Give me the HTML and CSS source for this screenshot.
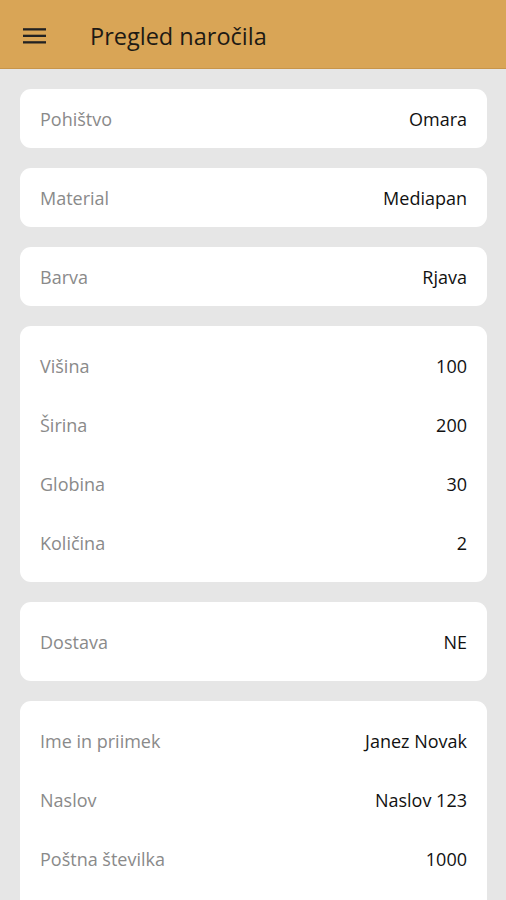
FILE: index.html
```html
<!DOCTYPE html>
<html lang="sl">
<head>
<meta charset="utf-8">
<title>Pregled naročila</title>
<link rel="stylesheet" href="styles.css">
</head>
<body>
<header class="appbar">
  <svg class="menu" width="23" height="16" viewBox="0 0 23 16"><rect x="0" y="0.2" width="23" height="2.3" fill="#222"/><rect x="0" y="6.7" width="23" height="2.3" fill="#222"/><rect x="0" y="13.2" width="23" height="2.3" fill="#222"/></svg>
  <h1 class="title">Pregled naročila</h1>
</header>
<main class="content">
  <section class="card">
    <div class="row"><span class="label">Pohištvo</span><span class="value">Omara</span></div>
  </section>
  <section class="card">
    <div class="row"><span class="label">Material</span><span class="value">Mediapan</span></div>
  </section>
  <section class="card">
    <div class="row"><span class="label">Barva</span><span class="value">Rjava</span></div>
  </section>
  <section class="card padded">
    <div class="row"><span class="label">Višina</span><span class="value">100</span></div>
    <div class="row"><span class="label">Širina</span><span class="value">200</span></div>
    <div class="row"><span class="label">Globina</span><span class="value">30</span></div>
    <div class="row"><span class="label">Količina</span><span class="value">2</span></div>
  </section>
  <section class="card padded">
    <div class="row"><span class="label">Dostava</span><span class="value">NE</span></div>
  </section>
  <section class="card padded last">
    <div class="row"><span class="label">Ime in priimek</span><span class="value">Janez Novak</span></div>
    <div class="row"><span class="label">Naslov</span><span class="value">Naslov 123</span></div>
    <div class="row"><span class="label">Poštna številka</span><span class="value">1000</span></div>
  </section>
</main>
</body>
</html>
```
FILE: styles.css
```css
* { box-sizing: border-box; }
html, body { margin: 0; padding: 0; }
body {
  background: #e6e6e6;
  font-family: "Open Sans", "Noto Sans", sans-serif;
  height: 900px;
  overflow: hidden;
}
.appbar {
  height: 69px;
  background: #d9a556;
  border-bottom: 1px solid #c8954a;
  display: flex;
  align-items: center;
  padding-left: 23px;
  padding-top: 3px;
}
.menu { display: block; }
.title {
  margin: 0 0 0 44px;
  font-size: 23.5px;
  font-weight: 400;
  color: #1e1a14;
}
.content {
  padding: 20px 19px 0 20px;
  display: flex;
  flex-direction: column;
  gap: 20px;
}
.card {
  background: #fff;
  border-radius: 11px;
}
.card.padded { padding: 10px 0; }
.card.last { padding-bottom: 30px; }
.row {
  height: 59px;
  display: flex;
  align-items: center;
  justify-content: space-between;
  padding: 0 20px;
  font-size: 18px;
}
.label { color: #8a8a8a; }
.value { color: #111; }
```
